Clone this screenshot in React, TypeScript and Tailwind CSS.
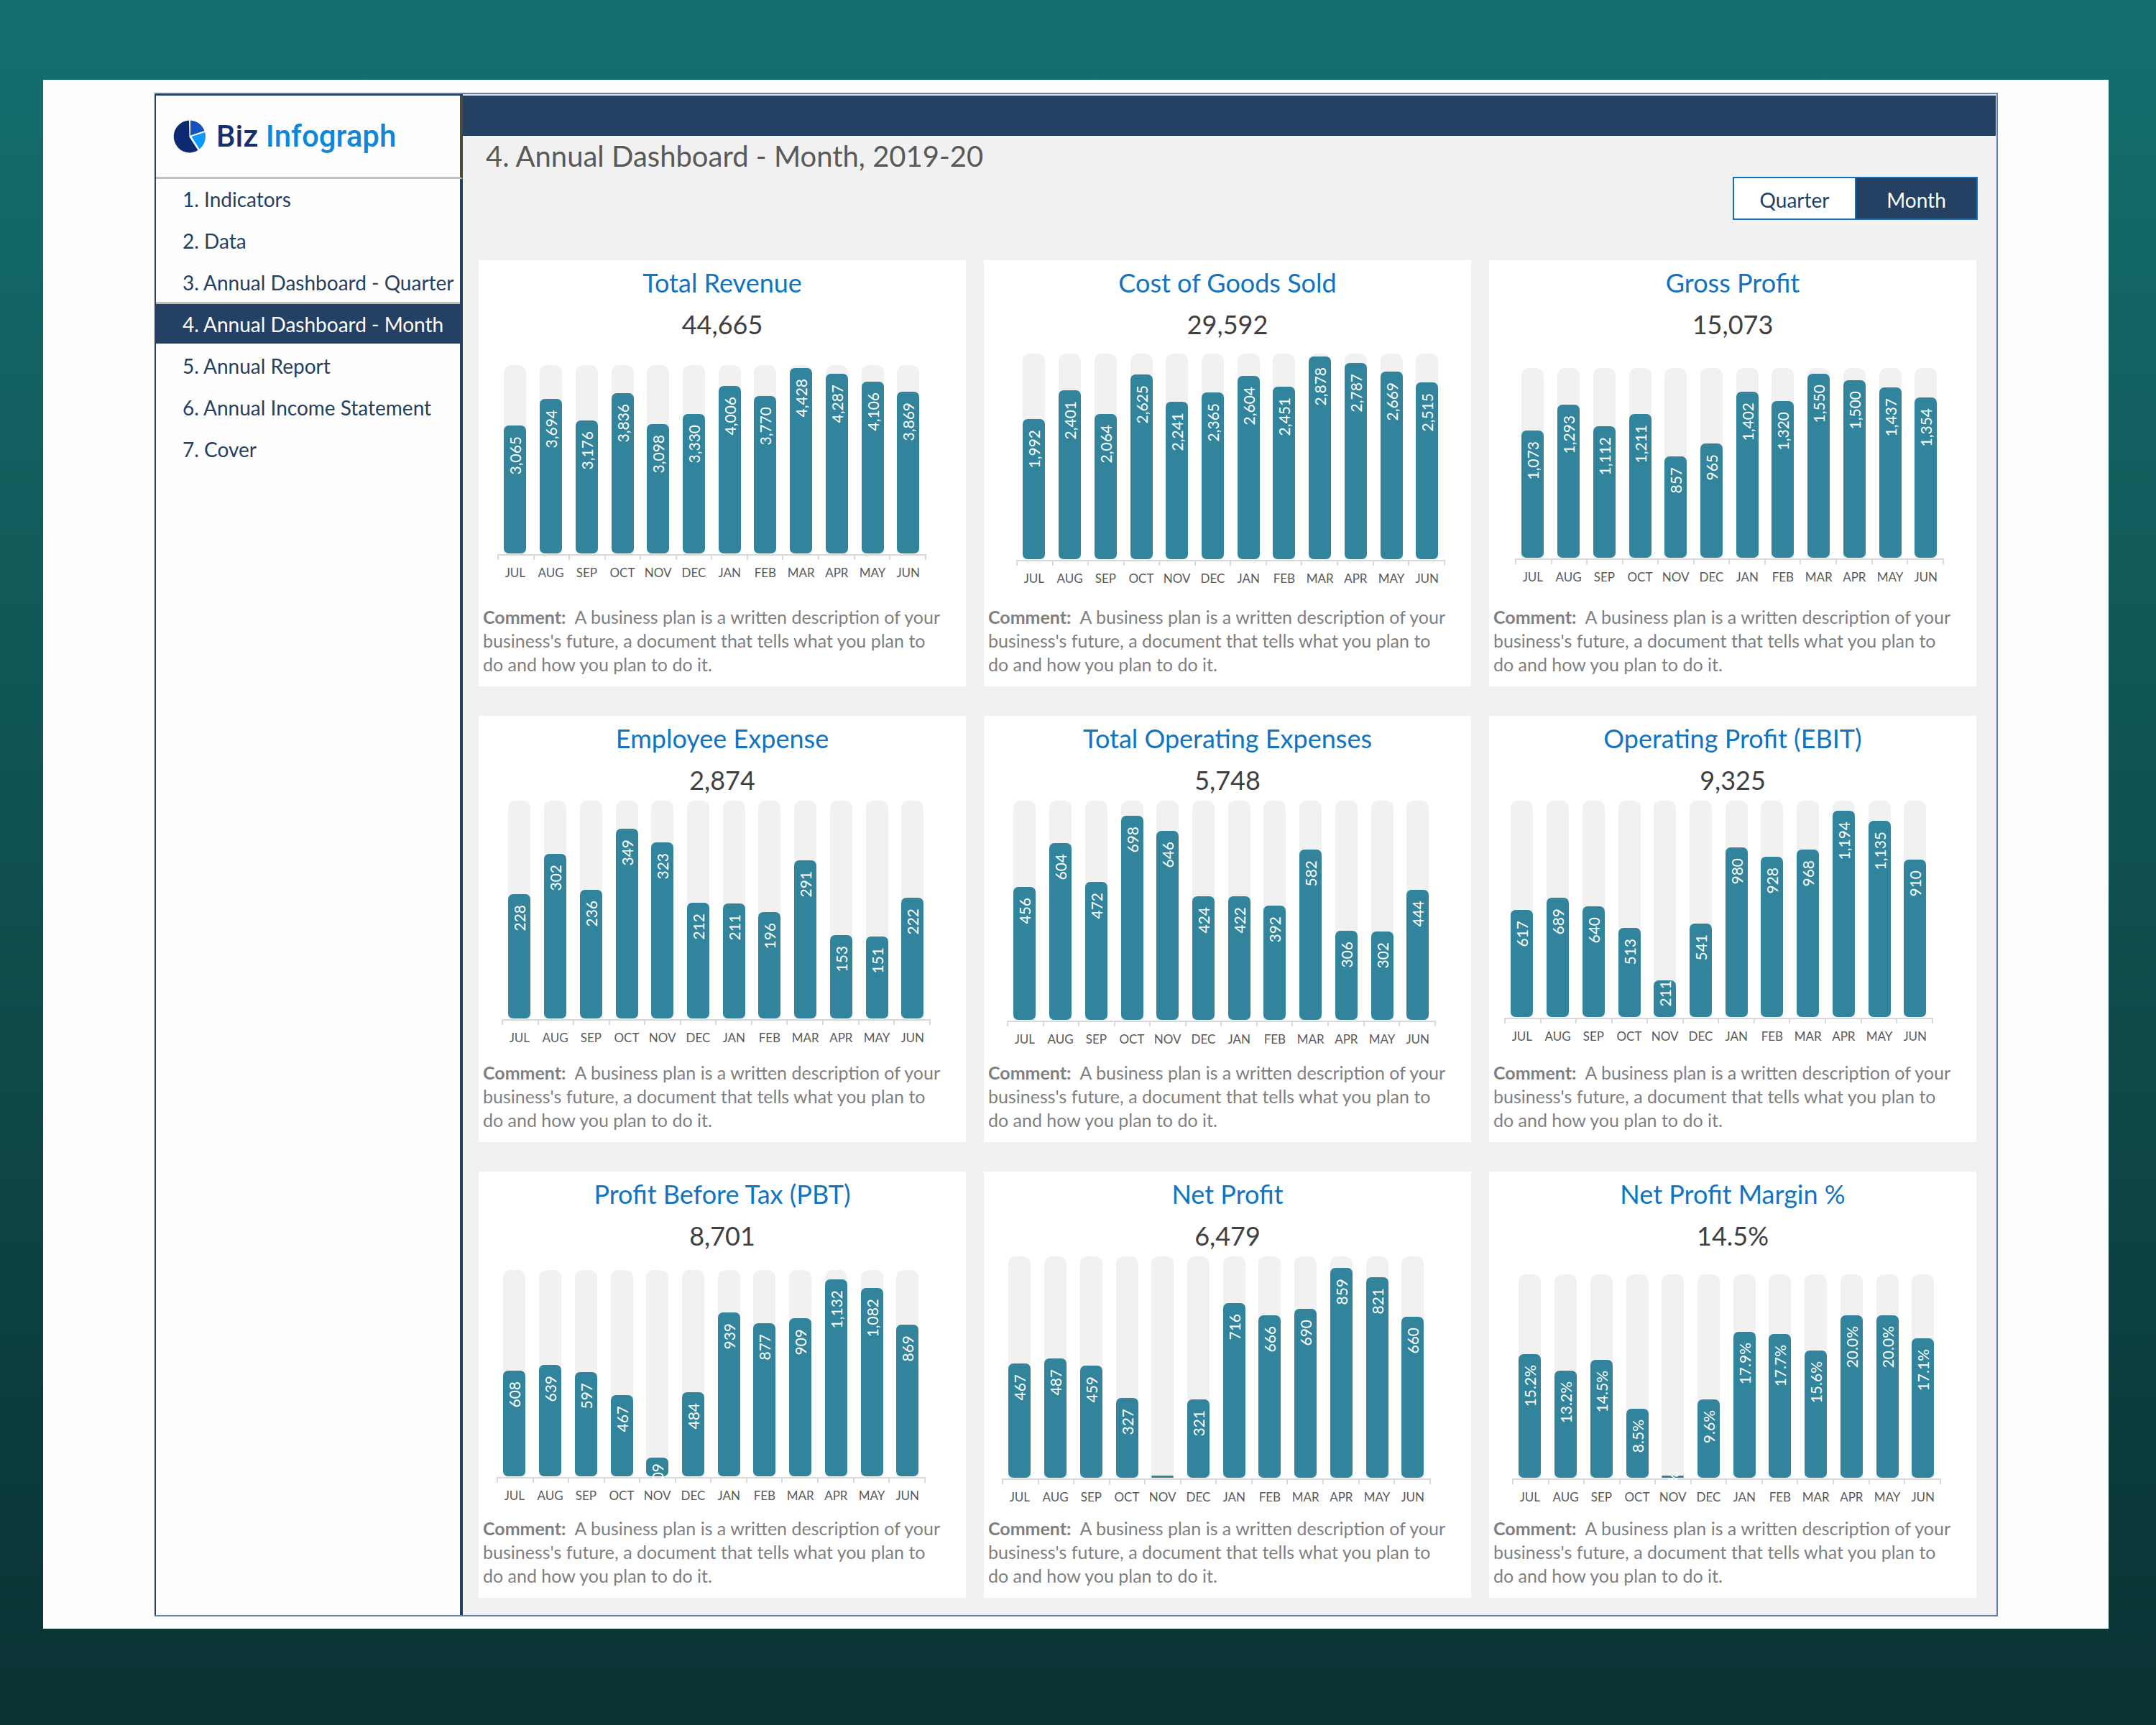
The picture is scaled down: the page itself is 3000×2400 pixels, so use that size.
import React, { useState } from "react";

type Metric = {
  title: string;
  total: string;
  values: number[];
  max: number;
  percent?: boolean;
  // Plot placement inside the card
  plot: string;
  track: string;
  // Label inset for November when its bar is too short for the usual one
  novInset?: number;
};

const MONTHS = ["JUL", "AUG", "SEP", "OCT", "NOV", "DEC", "JAN", "FEB", "MAR", "APR", "MAY", "JUN"];

const METRICS: Metric[] = [
  {
    title: "Total Revenue",
    total: "44,665",
    values: [3065, 3694, 3176, 3836, 3098, 3330, 4006, 3770, 4428, 4287, 4106, 3869],
    max: 4500,
    plot: "ml-[26px] pt-[28px]",
    track: "h-[262px]",
  },
  {
    title: "Cost of Goods Sold",
    total: "29,592",
    values: [1992, 2401, 2064, 2625, 2241, 2365, 2604, 2451, 2878, 2787, 2669, 2515],
    max: 2920,
    plot: "ml-[45px] pt-[12px]",
    track: "h-[286px]",
  },
  {
    title: "Gross Profit",
    total: "15,073",
    values: [1073, 1293, 1112, 1211, 857, 965, 1402, 1320, 1550, 1500, 1437, 1354],
    max: 1600,
    plot: "ml-[36px] pt-[32px]",
    track: "h-[264px]",
  },
  {
    title: "Employee Expense",
    total: "2,874",
    values: [228, 302, 236, 349, 323, 212, 211, 196, 291, 153, 151, 222],
    max: 400,
    plot: "ml-[32px] pt-0",
    track: "h-[303px]",
  },
  {
    title: "Total Operating Expenses",
    total: "5,748",
    values: [456, 604, 472, 698, 646, 424, 422, 392, 582, 306, 302, 444],
    max: 750,
    plot: "ml-[32px] pt-0",
    track: "h-[305px]",
  },
  {
    title: "Operating Profit (EBIT)",
    total: "9,325",
    values: [617, 689, 640, 513, 211, 541, 980, 928, 968, 1194, 1135, 910],
    max: 1250,
    plot: "ml-[21px] pt-0",
    track: "h-[301px]",
    novInset: 0,
  },
  {
    title: "Profit Before Tax (PBT)",
    total: "8,701",
    values: [608, 639, 597, 467, 109, 484, 939, 877, 909, 1132, 1082, 869],
    max: 1184,
    plot: "ml-[25px] pt-[19px]",
    track: "h-[287px]",
    novInset: 8,
  },
  {
    title: "Net Profit",
    total: "6,479",
    values: [467, 487, 459, 327, 8, 321, 716, 666, 690, 859, 821, 660],
    max: 906,
    plot: "ml-[25px] pt-0",
    track: "h-[308px]",
  },
  {
    title: "Net Profit Margin %",
    total: "14.5%",
    values: [15.2, 13.2, 14.5, 8.5, 0.3, 9.6, 17.9, 17.7, 15.6, 20.0, 20.0, 17.1],
    max: 25,
    percent: true,
    plot: "ml-[32px] pt-[25px]",
    track: "h-[283px]",
    novInset: -6,
  },
];

const NAV = [
  "1. Indicators",
  "2. Data",
  "3. Annual Dashboard - Quarter",
  "4. Annual Dashboard - Month",
  "5. Annual Report",
  "6. Annual Income Statement",
  "7. Cover",
];

function formatValue(value: number, percent?: boolean) {
  return percent ? `${value.toFixed(1)}%` : value.toLocaleString("en-US");
}

function Logo() {
  return (
    <div className="flex h-[116px] items-center gap-[14px] border-r-4 border-r-[#4a4a36] border-b-3 border-b-[#bfbfbf] pl-6">
      <svg className="h-[46px] w-[46px] shrink-0" viewBox="0 0 46 46" aria-hidden="true">
        <path d="M22 0.5 A22 22.5 0 1 0 34.5 42 L22.5 23.5 Z" fill="#0b2a70" />
        <path d="M24 0.5 A22 22.5 0 0 1 43.5 15 L24 21.5 Z" fill="#1450c0" />
        <path d="M44.2 17 A22 22.5 0 0 1 36.5 40.5 L25.5 23 Z" fill="#0d98ff" />
      </svg>
      <span className="font-[Roboto,sans-serif] text-[42px] leading-none font-medium whitespace-nowrap">
        <span className="text-[#15306e]">Biz</span> <span className="text-[#0f86d8]">Infograph</span>
      </span>
    </div>
  );
}

function Sidebar({ active, onSelect }: { active: number; onSelect: (i: number) => void }) {
  return (
    <aside className="flex w-[429px] shrink-0 flex-col border-t-2 border-l-2 border-[#244062]">
      <Logo />
      <nav className="grow border-r-4 border-[#244062]">
        <ul>
          {NAV.map((item, i) => (
            <li
              key={item}
              className={i === active - 1 ? "h-[58px] border-b-3 border-[#bfbfbf]" : "h-[58px]"}
            >
              <a
                href="#"
                onClick={(e) => {
                  e.preventDefault();
                  onSelect(i);
                }}
                className={
                  i === active
                    ? "flex h-[55px] items-center bg-[#244062] pl-[37px] text-[28px] whitespace-nowrap text-white"
                    : "flex h-[55px] items-center pl-[37px] text-[28px] whitespace-nowrap text-[#244062]"
                }
              >
                {item}
              </a>
            </li>
          ))}
        </ul>
      </nav>
    </aside>
  );
}

function Bar({ metric, index }: { metric: Metric; index: number }) {
  const value = metric.values[index];
  const share = value / metric.max;
  const inset = index === 4 && metric.novInset !== undefined ? metric.novInset : 15;
  const labelled = share > 0.01 || metric.percent;
  return (
    <div className="flex w-[31px] flex-col justify-end justify-self-center rounded-t-[10px] bg-[#f1f1f1]">
      <div className="flex items-start justify-center rounded-[7px] bg-[#31849b]" style={{ height: `${share * 100}%` }}>
        {labelled && (
          <span
            className="rotate-180 text-[21px] leading-[31px] whitespace-nowrap text-white [writing-mode:vertical-rl]"
            style={{ marginTop: inset }}
          >
            {formatValue(value, metric.percent)}
          </span>
        )}
      </div>
    </div>
  );
}

function BarChart({ metric }: { metric: Metric }) {
  return (
    <div className={`${metric.plot} min-h-[362px] w-[88%]`}>
      <div className={`${metric.track} grid grid-cols-12`}>
        {MONTHS.map((m, i) => (
          <Bar key={m} metric={metric} index={i} />
        ))}
      </div>
      <div className="mt-px grid h-[8px] grid-cols-12 border-t-2 border-r-2 border-[#d9d9d9]">
        {MONTHS.map((m) => (
          <div key={m} className="border-l-2 border-[#d9d9d9]" />
        ))}
      </div>
      <div className="relative z-10 grid grid-cols-12 pt-[6px]">
        {MONTHS.map((m) => (
          <span key={m} className="text-center text-[17px] leading-6 text-[#595959]">
            {m}
          </span>
        ))}
      </div>
    </div>
  );
}

function MetricCard({ metric }: { metric: Metric }) {
  return (
    <section className="flex flex-col bg-white pt-[2px] pb-[14px]">
      <h2 className="text-center text-[36px] leading-[58px] text-[#1273bf]">{metric.title}</h2>
      <p className="text-center text-[36px] leading-[58px] text-[#404040]">{metric.total}</p>
      <BarChart metric={metric} />
      <p className="pl-[6px] text-[25px] leading-[33px] whitespace-nowrap text-[#7f7f7f]">
        <b>Comment:</b>&nbsp; A business plan is a written description of your
        <br />
        business's future, a document that tells what you plan to
        <br />
        do and how you plan to do it.
      </p>
    </section>
  );
}

export default function App() {
  const [active, setActive] = useState(3);
  const [period, setPeriod] = useState<"Quarter" | "Month">("Month");

  return (
    <div className="min-h-screen bg-linear-to-b from-[#14706f] to-[#0a3233] pt-[111px] pr-[66px] pb-[133px] pl-[60px] font-[Lato,sans-serif]">
      <div className="bg-[#fefefe] pt-[18px] pr-[154px] pb-[17px] pl-[155px]">
        <div className="flex border-t-2 border-r-2 border-b-2 border-[#5f7fae]">
          <Sidebar active={active} onSelect={setActive} />
          <main className="min-w-0 grow bg-[#f1f1f1]">
            <div className="mr-px h-[58px] border-t-2 border-[#dce6f1] bg-[#244062]" />
            <h1 className="pl-8 text-[40px] leading-[57px] text-[#595959]">4. Annual Dashboard - Month, 2019-20</h1>
            <div className="flex justify-end pr-[26px]">
              {(["Quarter", "Month"] as const).map((p) => (
                <button
                  key={p}
                  type="button"
                  aria-pressed={period === p}
                  onClick={() => setPeriod(p)}
                  className={
                    period === p
                      ? "h-[60px] w-[171px] border-2 border-[#0f6fba] bg-[#244062] pt-[3px] text-[28px] text-white"
                      : "h-[60px] w-[170px] border-2 border-r-0 border-[#0f6fba] bg-white pt-[3px] text-[28px] text-[#244062]"
                  }
                >
                  {p}
                </button>
              ))}
            </div>
            <div className="grid grid-cols-3 gap-x-[25px] gap-y-[41px] pt-[56px] pr-[28px] pb-[24px] pl-[22px]">
              {METRICS.map((m) => (
                <MetricCard key={m.title} metric={m} />
              ))}
            </div>
          </main>
        </div>
      </div>
    </div>
  );
}
